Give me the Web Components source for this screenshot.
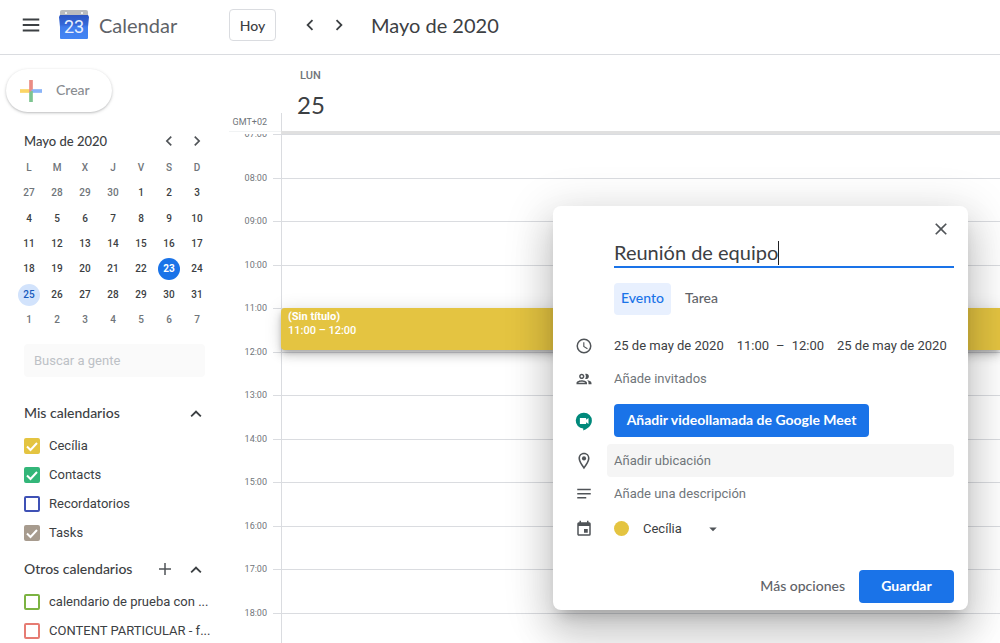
<!DOCTYPE html>
<html lang="es">
<head>
<meta charset="utf-8">
<meta name="viewport" content="width=device-width, initial-scale=1">
<title>Calendar</title>
<style>
  html, body { margin: 0; height: 100%; }
  body {
    background: #fff; color: #3c4043; overflow: hidden;
    font-family: Roboto, "Liberation Sans", sans-serif; font-size: 13px;
    --display: Lato, "Open Sans", sans-serif;
    --blue: #1a73e8; --line: #dadce0; --muted: #70757a; --icon: #505458;
  }
</style>
</head>
<body>
<calendar-app></calendar-app>
<script>
const define = (name, html, setup) => {
  const template = document.createElement('template');
  template.innerHTML = html;
  customElements.define(name, class extends HTMLElement {
    connectedCallback() {
      if (this.shadowRoot) return;
      this.attachShadow({ mode: 'open' }).append(template.content.cloneNode(true));
      if (setup) setup(this, this.shadowRoot);
    }
  });
};

const ICONS = {
  menu: '<path d="M3 5h18v2H3zM3 11h18v2H3zM3 17h18v2H3z"/>',
  left: '<path d="M15.4 7.4 14 6l-6 6 6 6 1.4-1.4L10.8 12z"/>',
  right: '<path d="M8.6 16.6 10 18l6-6-6-6-1.4 1.4 4.6 4.6z"/>',
  up: '<path d="m12 8-6 6 1.4 1.4 4.6-4.6 4.6 4.6L18 14z"/>',
  plus: '<path d="M11 4h2v7h7v2h-7v7h-2v-7H4v-2h7z"/>',
  close: '<path d="M19 6.4 17.6 5 12 10.6 6.4 5 5 6.4l5.6 5.6L5 17.6 6.4 19l5.6-5.6 5.6 5.6 1.4-1.4-5.6-5.6z"/>',
  clock: '<path d="M12 2a10 10 0 1 0 0 20 10 10 0 0 0 0-20zm0 18a8 8 0 1 1 0-16 8 8 0 0 1 0 16zm.5-13H11v6l5.2 3.2.8-1.3-4.5-2.7z"/>',
  people: '<path d="M9 13.75c-2.340 0-7 1.170-7 3.500V19h14v-1.750c0-2.330-4.660-3.500-7-3.500zM4.340 17c.84-.58 2.870-1.250 4.660-1.250s3.820.67 4.660 1.250H4.340zM9 12c1.930 0 3.500-1.570 3.500-3.500S10.930 5 9 5 5.500 6.570 5.500 8.500 7.070 12 9 12zm0-5c.83 0 1.500.67 1.500 1.500S9.830 10 9 10s-1.500-.67-1.500-1.500S8.170 7 9 7zm7.040 6.810c1.160.84 1.960 1.960 1.960 3.440V19h4v-1.750c0-2.020-3.500-3.170-5.960-3.440zM15 12c1.930 0 3.500-1.570 3.500-3.500S16.930 5 15 5c-.54 0-1.040.13-1.500.35.63.89 1 1.980 1 3.150s-.37 2.260-1 3.150c.46.22.96.35 1.500.35z"/>',
  place: '<path d="M12 1C7.900 1 4.600 4.300 4.600 8.400 4.600 14 12 23 12 23s7.400-9 7.400-14.600C19.400 4.300 16.100 1 12 1zM6.700 8.400a5.300 5.300 0 0 1 10.600 0c0 3.100-3 7.900-5.300 11-2.300-3.100-5.300-7.900-5.300-11z"/><circle cx="12" cy="8.500" r="2.800"/>',
  notes: '<path d="M3 5h18v2H3zM3 10.500h18v2H3zM3 16h12v2H3z"/>',
  event: '<path d="M12 12h5v5h-5z"/><path d="M19 3h-1V1h-2v2H8V1H6v2H5a2 2 0 0 0-2 2v14c0 1.100.9 2 2 2h14a2 2 0 0 0 2-2V5a2 2 0 0 0-2-2zm0 16H5V8h14z"/>',
  drop: '<path d="M7 10l5 5 5-5z"/>',
  meet: '<path fill="#00897b" d="M12 1a10.500 10.500 0 0 0-1 21v2.500c3-.9 11.500-5.500 11.500-13A10.500 10.500 0 0 0 12 1z"/><path fill="#fff" d="M6.500 8h8.300v2.300L18 8v8l-3.200-2.300V16H6.500z"/>',
  create: '<path fill="#ea8c84" d="M10 0h4v12h-4z"/><path fill="#fbd565" d="M0 10h10v4H0z"/><path fill="#8ab4f8" d="M12 10h12v4H12z"/><path fill="#7dc490" d="M10 12h4v12h-4z"/><path fill="#ea8c84" d="M10 10h4l-4 4z"/>'
};

define('ui-icon', `
  <style>:host { display: block; flex: none; width: 18px; height: 18px; } svg { display: block; width: 100%; height: 100%; overflow: visible; fill: currentColor; }</style>
  <svg viewBox="0 0 24 24" aria-hidden="true"></svg>`,
  (host, root) => { root.querySelector('svg').innerHTML = ICONS[host.getAttribute('name')]; });

define('calendar-logo', `
  <style>:host { display: block; width: 30px; height: 30px; } svg { display: block; overflow: visible; }</style>
  <svg width="30" height="30" viewBox="0 0 30 30" role="img" aria-label="Calendar">
    <defs><linearGradient id="g" x1="0" y1="0" x2="0" y2="1"><stop offset="0" stop-color="#2c56c4"/><stop offset=".4" stop-color="#3468d8"/><stop offset=".5" stop-color="#3f7cec"/><stop offset="1" stop-color="#4285f4"/></linearGradient></defs>
    <path fill="#b9bbbe" d="M3 0h24a2 2 0 0 1 2 2v6H1V2a2 2 0 0 1 2-2z"/>
    <circle cx="7" cy="3" r="1" fill="#fff"/><circle cx="23" cy="3" r="1" fill="#fff"/>
    <path fill="url(#g)" d="M1 5h28l1 2-1 10v11a1 1 0 0 1-1 1H2a1 1 0 0 1-1-1V17L0 7z"/>
    <text x="15" y="23" text-anchor="middle" font-family="Roboto, sans-serif" font-size="18" fill="#e8f0fe">23</text>
  </svg>`);

define('app-header', `
  <style>
    :host { display: flex; align-items: center; box-sizing: border-box; height: 55px; padding-bottom: 4px; flex: none; border-bottom: 1px solid var(--line); font-family: var(--display); color: #3c4043; }
    button { border: 0; background: none; padding: 0; color: inherit; font: inherit; display: grid; place-items: center; }
    .brand { display: flex; align-items: center; width: 229px; box-sizing: border-box; padding-left: 20px; }
    .brand calendar-logo { margin: 0 10px 0 17px; }
    .brand span { font-size: 20px; line-height: 28px; color: #5f6368; }
    ui-icon { width: 22px; height: 22px; }
    .today { width: 47px; height: 32px; border: 1px solid var(--line); border-radius: 4px; font-size: 14px; font-weight: 500; }
    .nav { display: flex; gap: 9px; margin: 0 23px; }
    .nav button { width: 20px; height: 28px; }
    h1 { margin: 0; font-size: 20px; line-height: 28px; font-weight: 400; }
  </style>
  <div class="brand"><button aria-label="Menú"><ui-icon name="menu"></ui-icon></button><calendar-logo></calendar-logo><span>Calendar</span></div>
  <button class="today">Hoy</button>
  <div class="nav"><button aria-label="Día anterior"><ui-icon name="left"></ui-icon></button><button aria-label="Día siguiente"><ui-icon name="right"></ui-icon></button></div>
  <h1>Mayo de 2020</h1>`);

define('create-button', `
  <style>
    :host { display: block; }
    button { display: flex; align-items: center; gap: 14px; height: 43px; width: 106px; padding: 0 14px; border: 0; border-radius: 22px; background: #fff; box-shadow: 0 1px 2px rgba(60,64,67,.25), 0 1px 3px 1px rgba(60,64,67,.08); font: 500 14px/20px var(--display); color: #8a8d91; }
    ui-icon { width: 22px; height: 22px; }
    span { padding-bottom: 2px; }
  </style>
  <button><ui-icon name="create"></ui-icon><span><slot></slot></span></button>`);

define('mini-calendar', `
  <style>
    :host { display: block; }
    header { display: flex; align-items: center; height: 28px; padding-left: 9px; }
    h2 { margin: 0; flex: 1; font: 500 13px/20px var(--display); color: #3c4043; }
    button { border: 0; padding: 0; background: none; color: var(--icon); width: 28px; height: 28px; display: grid; place-items: center; }
    ui-icon { width: 20px; height: 20px; }
    .month { display: grid; height: 178px; }
    table { width: 196px; height: 178px; border-collapse: collapse; table-layout: fixed; font-size: 10px; font-weight: 500; }
    tr { height: 25px; }
    th, td { height: 25px; padding: 0; text-align: center; vertical-align: middle; font-weight: 500; }
    th, .out { color: var(--muted); }
    span { display: block; width: 22px; line-height: 22px; margin: 0 auto; border-radius: 11px; }
    .today { background: var(--blue); color: #fff; font-weight: 700; }
    .picked { background: #d2e3fc; color: #185abc; }
  </style>
  <header><h2>Mayo de 2020</h2><button aria-label="Mes anterior"><ui-icon name="left"></ui-icon></button><button aria-label="Mes siguiente"><ui-icon name="right"></ui-icon></button></header>
  <table><tbody><tr><th>L</th><th>M</th><th>X</th><th>J</th><th>V</th><th>S</th><th>D</th></tr></tbody></table>`,
  (host, root) => {
    const body = root.querySelector('tbody');
    for (let week = 0; week < 6; week++) {
      const row = body.insertRow();
      for (let day = 0; day < 7; day++) {
        const date = new Date(2020, 3, 27 + week * 7 + day);
        const mark = document.createElement('span');
        mark.textContent = date.getDate();
        if (date.getMonth() !== 4) mark.className = 'out';
        else if (date.getDate() === 23) mark.className = 'today';
        else if (date.getDate() === 25) mark.className = 'picked';
        row.insertCell().append(mark);
      }
    }
  });

define('people-search', `
  <style>
    :host { display: block; }
    input { box-sizing: border-box; width: 100%; height: 33px; border: 0; border-radius: 4px; padding: 0 10px; background: #fafafa; font: 13px Roboto, sans-serif; }
    input::placeholder { color: #bdc1c6; opacity: 1; }
  </style>
  <input type="text" placeholder="Buscar a gente" aria-label="Buscar a gente">`);

define('calendar-group', `
  <style>
    :host { display: block; }
    header { display: flex; align-items: center; height: 37px; }
    h2 { margin: 0; flex: 1; font: 500 14px/20px var(--display); color: #3c4043; }
    button { border: 0; padding: 0; background: none; width: 20px; height: 20px; margin-left: 10px; display: grid; place-items: center; color: #3c4043; }
    .up { width: 22px; height: 22px; }
    .add { display: none; color: var(--icon); }
    :host([addable]) .add { display: grid; }
  </style>
  <header><h2></h2><button class="add" aria-label="Añadir otros calendarios"><ui-icon name="plus"></ui-icon></button><button aria-label="Contraer"><ui-icon name="up" class="up"></ui-icon></button></header>
  <slot></slot>`,
  (host, root) => { root.querySelector('h2').textContent = host.getAttribute('heading'); });

define('calendar-check', `
  <style>
    :host { display: block; }
    label { display: flex; align-items: center; gap: 9px; height: 29px; }
    .box { display: grid; flex: none; }
    input, svg { grid-area: 1 / 1; width: 16px; height: 16px; margin: 0; box-sizing: border-box; }
    input { appearance: none; border: 2px solid var(--tint); border-radius: 2px; }
    input:checked { background: var(--tint); }
    svg { fill: none; stroke: #fff; stroke-width: 2; visibility: hidden; pointer-events: none; }
    input:checked + svg { visibility: visible; }
    .name { line-height: 20px; white-space: nowrap; }
  </style>
  <label><span class="box"><input type="checkbox"><svg viewBox="0 0 16 16" aria-hidden="true"><path d="M3 8.500 6.500 12 13 5"/></svg></span><span class="name"><slot></slot></span></label>`,
  (host, root) => {
    host.style.setProperty('--tint', host.getAttribute('tint'));
    root.querySelector('input').checked = host.hasAttribute('checked');
  });

define('side-panel', `
  <style>
    :host { display: block; flex: none; width: 229px; box-sizing: border-box; padding-top: 14px; }
    create-button { margin-left: 6px; }
    mini-calendar { width: 196px; margin: 15px 0 0 15px; }
    people-search, calendar-group { margin-left: 24px; width: 181px; }
    people-search { margin-top: 11px; }
    .mine { margin-top: 17px; }
    .others { margin-top: 3px; }
  </style>
  <create-button>Crear</create-button>
  <mini-calendar></mini-calendar>
  <people-search></people-search>
  <calendar-group class="mine" heading="Mis calendarios">
    <calendar-check tint="#e4c441" checked>Cecília</calendar-check>
    <calendar-check tint="#33b679" checked>Contacts</calendar-check>
    <calendar-check tint="#3f51b5">Recordatorios</calendar-check>
    <calendar-check tint="#a79b8e" checked>Tasks</calendar-check>
  </calendar-group>
  <calendar-group class="others" heading="Otros calendarios" addable>
    <calendar-check tint="#7cb342">calendario de prueba con ...</calendar-check>
    <calendar-check tint="#e67c73">CONTENT PARTICULAR - f...</calendar-check>
  </calendar-group>`);

define('day-view', `
  <style>
    :host { display: flex; flex-direction: column; flex: 1; min-width: 0; }
    .head { display: grid; grid-template-columns: 52px 1fr; height: 79px; flex: none; }
    .zone { text-align: right; font-size: 9px; line-height: 12px; color: var(--muted); padding: 61px 14px 0 0; }
    .zone { border-bottom: 1px solid #f1f3f4; margin-bottom: 2px; }
    .day { display: flex; flex-direction: column; padding: 13px 0 0 16px; border-bottom: 3px solid #e0e0e0; background: linear-gradient(var(--line), var(--line)) 0 100% / 1px 18px no-repeat; }
    .week { font-size: 11px; line-height: 16px; font-weight: 500; color: var(--muted); padding-left: 3px; }
    .date { font: 400 24px/30px var(--display); margin-top: 6px; }
    .scroll { flex: 1; min-height: 0; overflow: hidden; }
    .grid { display: grid; grid-template-columns: 38px 6px 8px 1fr; grid-template-rows: repeat(12, 1fr); height: 522px; }
    time { grid-column: 1; margin-top: -7px; text-align: right; font-size: 9px; line-height: 14px; color: var(--muted); }
    .rule { grid-column: 3 / 5; border-top: 1px solid var(--line); }
    .axis { grid-area: 1 / 4 / 13 / 5; border-left: 1px solid var(--line); }
    .event { grid-area: 5 / 4 / 6 / 5; margin-bottom: 2px; padding: 2px 7px; border-radius: 4px 0 0 4px; background: #e4c441; color: #fff; font-size: 11px; line-height: 14px; font-weight: 500; box-shadow: 0 6px 10px rgba(0,0,0,.14), 0 1px 18px rgba(0,0,0,.12), 0 3px 5px -1px rgba(0,0,0,.2); }
    .event b { font-weight: 700; display: block; }
  </style>
  <div class="head"><div class="zone">GMT+02</div><div class="day"><span class="week">LUN</span><span class="date">25</span></div></div>
  <div class="scroll"><div class="grid"><div class="axis"></div></div></div>`,
  (host, root) => {
    const grid = root.querySelector('.grid');
    for (let i = 0; i < 12; i++) {
      const label = document.createElement('time');
      label.textContent = String(i + 7).padStart(2, '0') + ':00';
      label.style.gridRow = i + 1;
      const rule = document.createElement('div');
      rule.className = 'rule';
      rule.style.gridRow = i + 1;
      grid.append(label, rule);
    }
    const event = document.createElement('div');
    event.className = 'event';
    event.innerHTML = '<b>(Sin título)</b>11:00 – 12:00';
    grid.append(event);
  });

define('dialog-row', `
  <style>
    :host { display: grid; grid-template-columns: 18px minmax(0, 1fr); column-gap: 14px; align-items: center; min-height: 33px; }
    ui-icon { color: var(--icon); }
    .content { display: flex; align-items: center; }
  </style>
  <div class="icon"></div><div class="content"><slot></slot></div>`,
  (host, root) => {
    const icon = document.createElement('ui-icon');
    icon.setAttribute('name', host.getAttribute('icon'));
    root.querySelector('.icon').append(icon);
  });

define('event-dialog', `
  <style>
    :host { display: block; box-sizing: border-box; width: 415px; padding: 13px 14px 7px 22px; border-radius: 8px; background: #fff; box-shadow: 0 24px 38px 3px rgba(0,0,0,.14), 0 9px 46px 8px rgba(0,0,0,.12), 0 11px 15px -7px rgba(0,0,0,.2); }
    button { border: 0; padding: 0; background: none; color: #3c4043; font: 13px Roboto, sans-serif; white-space: nowrap; }
    input { box-sizing: border-box; border: 0; padding: 0; background: none; color: #3c4043; font: 13px Roboto, sans-serif; outline: 0; }
    input::placeholder { color: var(--muted); opacity: 1; }
    .close { display: block; margin: 0 3px 0 auto; color: var(--icon); }
    .close, .close ui-icon { height: 20px; width: 20px; }
    .title { display: flex; align-items: center; margin-left: 39px; height: 27px; border-bottom: 2px solid var(--blue); }
    .title input { font: 400 20px/24px var(--display); height: 26px; padding-bottom: 2px; field-sizing: content; caret-color: transparent; }
    .title i { width: 1px; height: 24px; background: #202124; }
    .tabs { display: flex; gap: 14px; margin: 15px 0 14px 39px; }
    .tabs button, .blue, .more { font: 500 14px/20px var(--display); height: 32px; padding-bottom: 2px; color: #5f6368; }
    .tabs .on { width: 57px; border-radius: 4px; background: #e8f0fe; color: var(--blue); }
    .when button, .when span { line-height: 20px; margin-left: 7px; }
    .when .next { margin-left: 13px; }
    .blue { height: 33px; border-radius: 4px; background: var(--blue); color: #fff; font-weight: 700; }
    .meet { width: 255px; margin-left: 7px; }
    .field { width: 100%; height: 33px; padding-left: 7px; border-radius: 4px; }
    .place .field { background: #f5f5f5; }
    .place { margin-top: 7px; }
    .call { margin-top: 9px; }
    .dot { width: 15px; height: 15px; border-radius: 8px; background: #e4c441; margin-left: 7px; }
    .owner { display: grid; align-items: center; margin-left: 14px; }
    .owner select { grid-area: 1 / 1; appearance: none; border: 0; padding: 0; background: none; width: 79px; font: 13px/20px Roboto, sans-serif; color: #3c4043; }
    .owner ui-icon { grid-area: 1 / 1; justify-self: end; color: var(--icon); pointer-events: none; }
    .own { margin-top: 2px; }
    footer { display: flex; justify-content: flex-end; align-items: center; gap: 14px; margin-top: 25px; }
    footer .blue { width: 95px; }
  </style>
  <button class="close" aria-label="Cerrar"><ui-icon name="close"></ui-icon></button>
  <div class="title"><input type="text" value="Reunión de equipo" aria-label="Título"><i></i></div>
  <div class="tabs"><button class="on">Evento</button><button>Tarea</button></div>
  <dialog-row icon="clock" class="when"><button>25 de may de 2020</button><button class="next">11:00</button><span>–</span><button>12:00</button><button class="next">25 de may de 2020</button></dialog-row>
  <dialog-row icon="people"><input class="field" type="text" placeholder="Añade invitados" aria-label="Invitados"></dialog-row>
  <dialog-row icon="meet" class="call"><button class="blue meet">Añadir videollamada de Google Meet</button></dialog-row>
  <dialog-row icon="place" class="place"><input class="field" type="text" placeholder="Añadir ubicación" aria-label="Ubicación"></dialog-row>
  <dialog-row icon="notes"><input class="field" type="text" placeholder="Añade una descripción" aria-label="Descripción"></dialog-row>
  <dialog-row icon="event" class="own"><span class="dot"></span><label class="owner"><select aria-label="Calendario"><option>Cecília</option></select><ui-icon name="drop"></ui-icon></label></dialog-row>
  <footer><button class="more">Más opciones</button><button class="blue">Guardar</button></footer>`);

define('calendar-app', `
  <style>
    :host { display: flex; flex-direction: column; height: 100vh; overflow: hidden; position: relative; }
    main { display: flex; flex: 1; min-height: 0; }
    event-dialog { position: absolute; right: 32px; top: 206px; }
  </style>
  <app-header></app-header>
  <main><side-panel></side-panel><day-view></day-view></main>
  <event-dialog></event-dialog>`);
</script>
</body>
</html>
